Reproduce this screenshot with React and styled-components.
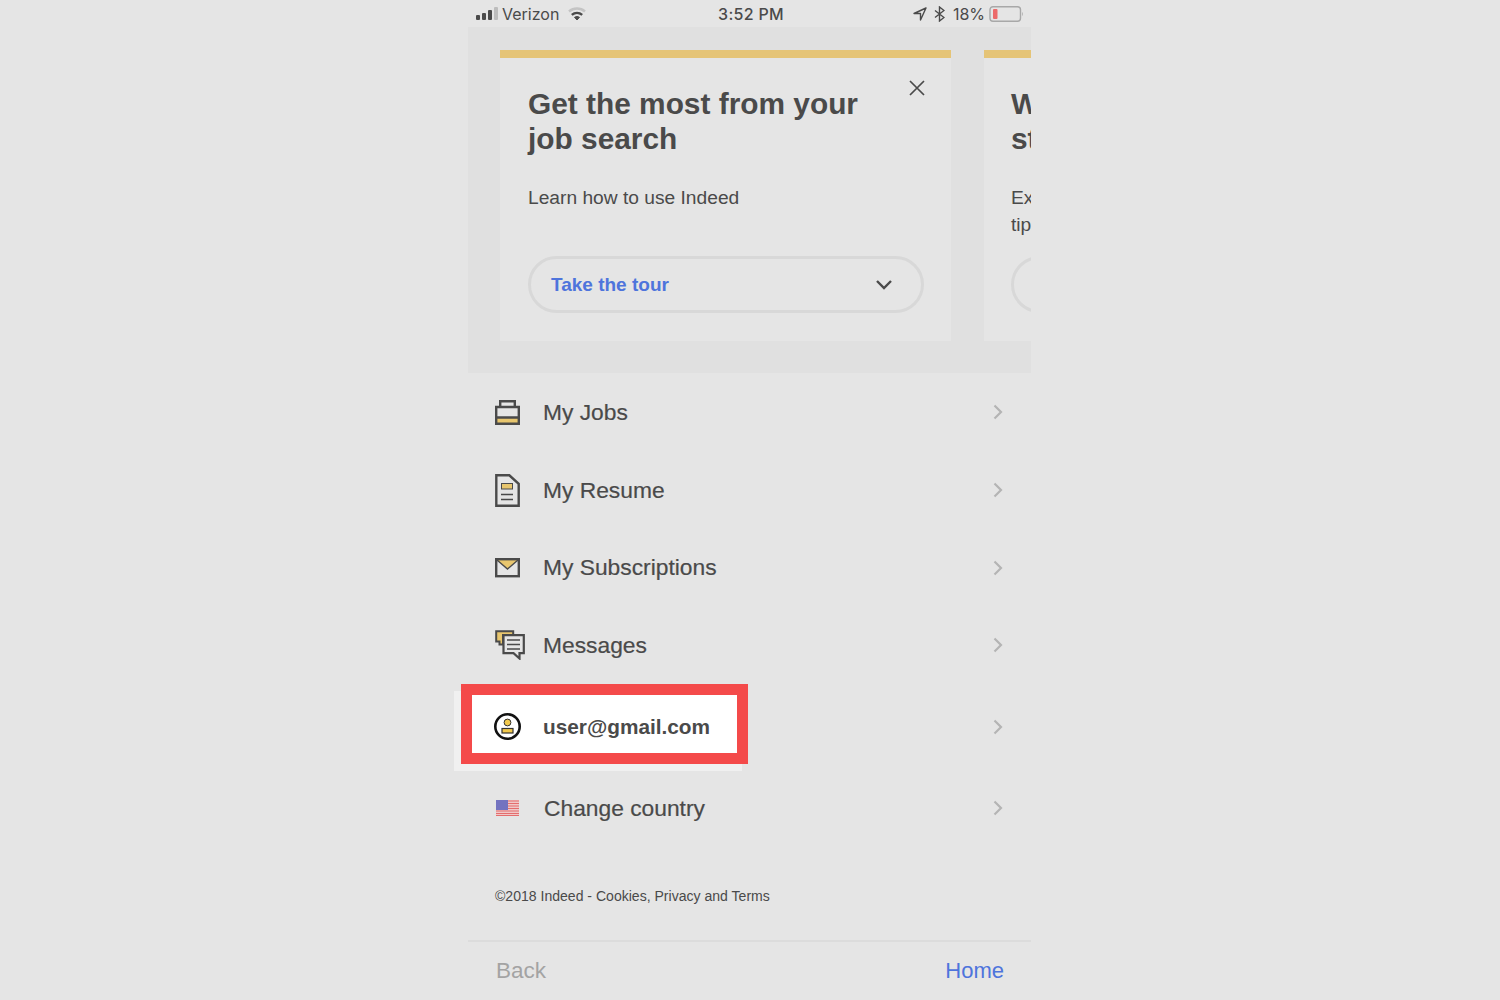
import React from "react";
import styled, { createGlobalStyle } from "styled-components";

const GlobalStyle = createGlobalStyle`
    html, body {
        margin: 0;
        padding: 0;
        height: 1000px;
        overflow: hidden;
        background: #e5e5e5;
    }
    * {
        box-sizing: border-box;
    }
`;

const MENU = [
    { label: "My Jobs", icon: <JobsIcon />, height: 78 },
    { label: "My Resume", icon: <ResumeIcon />, height: 78 },
    { label: "My Subscriptions", icon: <MailIcon />, height: 77 },
    { label: "Messages", icon: <MessagesIcon />, height: 78 },
];

export default function App() {
    return (
        <PageStl>
            <GlobalStyle />
            <PhoneStl>
                <StatusBarStl>
                    <StatusSideStl>
                        <SignalIcon />
                        <span>Verizon</span>
                        <WifiIcon />
                    </StatusSideStl>
                    <StatusTimeStl>3:52 PM</StatusTimeStl>
                    <StatusRightStl>
                        <LocationIcon />
                        <BluetoothIcon />
                        <span>18%</span>
                        <BatteryIcon />
                    </StatusRightStl>
                </StatusBarStl>

                <CarouselStl>
                    <CardStl $left={28}>
                        <CloseBtnStl>
                            <svg width="16" height="16" viewBox="0 0 16 16" fill="none" stroke="#4a4a4a" strokeWidth="1.7">
                                <path d="M1 1l14 14M15 1L1 15" />
                            </svg>
                        </CloseBtnStl>
                        <CardTitleStl>Get the most from your job search</CardTitleStl>
                        <CardTextStl>Learn how to use Indeed</CardTextStl>
                        <PillStl $top={45}>
                            <PillTextStl>Take the tour</PillTextStl>
                            <svg width="18" height="12" viewBox="0 0 18 12" fill="none" stroke="#4a4a4a" strokeWidth="2.4">
                                <path d="M2 2l7 7 7-7" />
                            </svg>
                        </PillStl>
                    </CardStl>
                    <CardStl $left={27}>
                        <CardTitleStl>Want to<br />stand out</CardTitleStl>
                        <CardTextStl>Expert advice and<br />tips</CardTextStl>
                        <PillStl $top={18} />
                    </CardStl>
                </CarouselStl>

                <MenuStl>
                    {MENU.map((item) => (
                        <MenuRow key={item.label} {...item} />
                    ))}
                    <HighlightRowStl $height={83}>
                        <WhiteBackStl />
                        <RedBoxStl />
                        <RowIconStl><UserIcon /></RowIconStl>
                        <UserLabelStl>user@gmail.com</UserLabelStl>
                        <Chevron />
                    </HighlightRowStl>
                    <MenuRow label="Change country" icon={<FlagIcon />} height={82} $shift />
                </MenuStl>

                <FooterTextStl>©2018 Indeed - Cookies, Privacy and Terms</FooterTextStl>
                <BottomBarStl>
                    <BackStl>Back</BackStl>
                    <HomeStl>Home</HomeStl>
                </BottomBarStl>
            </PhoneStl>
        </PageStl>
    );
}

function MenuRow({ label, icon, height, $shift }) {
    return (
        <RowStl $height={height}>
            <RowIconStl>{icon}</RowIconStl>
            <RowLabelStl $shift={$shift}>{label}</RowLabelStl>
            <Chevron />
        </RowStl>
    );
}

function Chevron() {
    return (
        <ChevronStl width="10" height="16" viewBox="0 0 10 16" fill="none" stroke="#b4b4b4" strokeWidth="2.2">
            <path d="M1.5 1.5L8 8l-6.5 6.5" />
        </ChevronStl>
    );
}

function SignalIcon() {
    return (
        <svg width="22" height="14" viewBox="0 0 22 14">
            <rect x="0" y="8" width="4" height="5" rx="1" fill="#4a4a4a" />
            <rect x="6" y="6" width="4" height="7" rx="1" fill="#4a4a4a" />
            <rect x="12" y="3" width="4" height="10" rx="1" fill="#4a4a4a" />
            <rect x="18" y="0" width="4" height="13" rx="1" fill="#bdbdbd" />
        </svg>
    );
}

function WifiIcon() {
    return (
        <WifiSvgStl width="18" height="14" viewBox="0 0 18 14" fill="none" strokeWidth="2.4">
            <path d="M1 4.500C5.500 .5 12.500 .5 17 4.500" stroke="#c4c4c4" />
            <path d="M3.800 7.800c3-2.500 7.400-2.500 10.400 0" stroke="#4a4a4a" />
            <path d="M6.500 10.300C8 9.300 10 9.300 11.500 10.300L9 13z" fill="#4a4a4a" stroke="#4a4a4a" strokeWidth="1" />
        </WifiSvgStl>
    );
}

function LocationIcon() {
    return (
        <svg width="14" height="14" viewBox="0 0 14 14" fill="none" stroke="#4a4a4a" strokeWidth="1.4" strokeLinejoin="round">
            <path d="M13 1L1 6.500h6.500V13z" />
        </svg>
    );
}

function BluetoothIcon() {
    return (
        <BluetoothSvgStl width="11" height="16" viewBox="0 0 11 16" fill="none" stroke="#4a4a4a" strokeWidth="1.4">
            <path d="M1 4.500l9 7-4.500 3.500V1l4.500 3.500-9 7" />
        </BluetoothSvgStl>
    );
}

function BatteryIcon() {
    return (
        <BatterySvgStl width="35" height="16" viewBox="0 0 35 16">
            <rect x="1" y="0.700" width="30.500" height="14.600" rx="3" fill="none" stroke="#a8a8a8" strokeWidth="1.400" />
            <rect x="4" y="3" width="4.500" height="10" rx="1" fill="#ec6a6a" />
            <path d="M33 6c1 .5 1 3.500 0 4z" fill="#a8a8a8" />
        </BatterySvgStl>
    );
}

function JobsIcon() {
    return (
        <svg width="25" height="25" viewBox="0 0 25 25">
            <rect x="1.200" y="18" width="22.600" height="5.500" fill="#e8c66e" />
            <path d="M1.200 7h22.600v16.800H1.200zM1.200 17.500h22.600M5.200 7V1.300h14.600V7" fill="none" stroke="#4a4a4a" strokeWidth="2.400" />
        </svg>
    );
}

function ResumeIcon() {
    return (
        <svg width="25" height="33" viewBox="0 0 25 33">
            <path d="M1.300 1.300h13l9.400 8.500v21.900H1.300z" fill="none" stroke="#4a4a4a" strokeWidth="2.400" />
            <rect x="6.500" y="9.500" width="11" height="5.500" fill="#e8c66e" stroke="#4a4a4a" strokeWidth="1" />
            <path d="M6 20.500h12M6 25.500h12" stroke="#4a4a4a" strokeWidth="1.400" />
        </svg>
    );
}

function MailIcon() {
    return (
        <svg width="25" height="20" viewBox="0 0 25 20">
            <path d="M2 2h21L12.500 11z" fill="#e8c66e" />
            <rect x="1.200" y="1.200" width="22.600" height="17" fill="none" stroke="#4a4a4a" strokeWidth="2.400" />
            <path d="M2 2l10.500 9L23 2" fill="none" stroke="#4a4a4a" strokeWidth="1.400" />
        </svg>
    );
}

function MessagesIcon() {
    return (
        <svg width="30" height="30" viewBox="0 0 30 30">
            <path d="M1.200 1.200h17v3.800H8v9.500H4.500v-3H1.200z" fill="#e8c66e" stroke="#4a4a4a" strokeWidth="2" />
            <path d="M8.500 5.200h20.300v18h-4.300v5.300l-6-5.300h-10z" fill="#e5e5e5" stroke="#4a4a4a" strokeWidth="2.200" />
            <path d="M12 10h13M12 14.500h13M12 19h13" stroke="#4a4a4a" strokeWidth="1.300" />
        </svg>
    );
}

function UserIcon() {
    return (
        <UserSvgStl width="28" height="28" viewBox="0 0 28 28">
            <circle cx="13.500" cy="13.500" r="12.200" fill="#fff" stroke="#111" strokeWidth="2.600" />
            <circle cx="13.500" cy="9.500" r="3.400" fill="#f2c94c" stroke="#333" strokeWidth="1" />
            <rect x="8" y="15.500" width="11" height="4.500" fill="#f2c94c" stroke="#333" strokeWidth="1.200" />
        </UserSvgStl>
    );
}

function FlagIcon() {
    return (
        <FlagSvgStl width="23" height="16" viewBox="0 0 23 16">
            <rect width="23" height="16" fill="#f0c8c8" />
            <path d="M0 1h23M0 3.500h23M0 6h23M0 8.500h23M0 11h23M0 13.500h23M0 15.500h23" stroke="#e46d6d" strokeWidth="1.200" />
            <rect width="12" height="10" fill="#7373c0" />
        </FlagSvgStl>
    );
}

const PageStl = styled.div`
    width: 1500px;
    height: 1000px;
    background: #e5e5e5;
    display: flex;
    justify-content: center;
    font-family: "Liberation Sans", Arial, sans-serif;
    color: #4a4a4a;
    overflow: hidden;
`;

const PhoneStl = styled.div`
    width: 563px;
    margin-left: -1px;
    height: 1000px;
    display: flex;
    flex-direction: column;
`;

const StatusBarStl = styled.div`
    height: 27px;
    flex: none;
    padding: 1px 7px 0 8px;
    display: grid;
    grid-template-columns: 1fr auto 1fr;
    align-items: center;
    font-family: Inter, "Liberation Sans", sans-serif;
    font-size: 16px;
    color: #4a4a4a;
`;

const StatusSideStl = styled.div`
    display: flex;
    align-items: center;
    gap: 4px;
`;

const WifiSvgStl = styled.svg`
    margin-left: 5px;
`;

const BluetoothSvgStl = styled.svg`
    margin: 0 3px 0 2px;
`;

const BatterySvgStl = styled.svg`
    margin-left: -1px;
`;

const StatusRightStl = styled(StatusSideStl)`
    justify-content: flex-end;
    gap: 5px;
`;

const StatusTimeStl = styled.div`
    margin-left: 2px;
    font-weight: 500;
    letter-spacing: 0.3px;
`;

const CarouselStl = styled.div`
    height: 346px;
    flex: none;
    background: #e0e0e0;
    padding: 23px 0 32px 32px;
    display: flex;
    gap: 33px;
    overflow: hidden;
`;

const CardStl = styled.div`
    position: relative;
    width: 451px;
    flex: none;
    background: #e5e5e5;
    border-top: 8px solid #e5c477;
    padding: 28px 27px 28px ${(props) => props.$left}px;
    display: flex;
    flex-direction: column;
`;

const CloseBtnStl = styled.div`
    position: absolute;
    top: 22px;
    right: 26px;
    line-height: 0;
`;

const CardTitleStl = styled.h2`
    margin: 0;
    width: 345px;
    font-size: 29.850px;
    line-height: 35px;
    font-weight: 700;
    color: #4a4a4a;
`;

const CardTextStl = styled.p`
    margin: 28px 0 0;
    font-size: 19.200px;
    line-height: 27px;
    color: #4a4a4a;
`;

const PillStl = styled.div`
    margin-top: ${(props) => props.$top}px;
    height: 57px;
    flex: none;
    border: 3px solid #d8d8d8;
    border-radius: 29px;
    display: flex;
    align-items: center;
    justify-content: space-between;
    padding: 0 28px 0 20px;
`;

const PillTextStl = styled.span`
    font-size: 19px;
    font-weight: 700;
    color: #4e74dc;
`;

const MenuStl = styled.div`
    flex: none;
    display: flex;
    flex-direction: column;
`;

const RowStl = styled.div`
    position: relative;
    height: ${(props) => props.$height}px;
    padding: 0 28px 0 27px;
    display: flex;
    align-items: center;
`;

const HighlightRowStl = styled(RowStl)`
    padding-top: 3px;
`;

const RowIconStl = styled.div`
    position: relative;
    width: 48px;
    flex: none;
    line-height: 0;
`;

const UserSvgStl = styled.svg`
    margin-left: -1px;
`;

const FlagSvgStl = styled.svg`
    margin-left: 1px;
`;

const RowLabelStl = styled.span`
    flex: 1;
    font-size: 22.800px;
    color: #4a4a4a;
    -webkit-text-stroke: 0.2px #4a4a4a;
    margin-left: ${(props) => (props.$shift ? "1px" : "0")};
`;

const UserLabelStl = styled(RowLabelStl)`
    position: relative;
    font-weight: 700;
    font-size: 20.800px;
    -webkit-text-stroke: 0;
`;

const ChevronStl = styled.svg`
    position: relative;
    flex: none;
`;

const WhiteBackStl = styled.div`
    position: absolute;
    left: -14px;
    top: 7px;
    width: 288px;
    height: 80px;
    background: #f0f0f0;
`;

const RedBoxStl = styled.div`
    position: absolute;
    left: -7px;
    top: 0;
    width: 287px;
    height: 80px;
    background: #fff;
    border: 11px solid #f44a4a;
`;

const FooterTextStl = styled.div`
    margin-top: 37px;
    padding-left: 27px;
    font-size: 14.050px;
    line-height: 20px;
    color: #4a4a4a;
`;

const BottomBarStl = styled.div`
    margin-top: 34px;
    flex: 1;
    border-top: 2px solid #dcdcdc;
    padding: 15px 27px 0 28px;
    display: flex;
    justify-content: space-between;
    font-size: 22.500px;
    line-height: 27px;
`;

const BackStl = styled.span`
    color: #a3a3a3;
`;

const HomeStl = styled.span`
    color: #4e74dc;
    font-size: 22px;
`;
